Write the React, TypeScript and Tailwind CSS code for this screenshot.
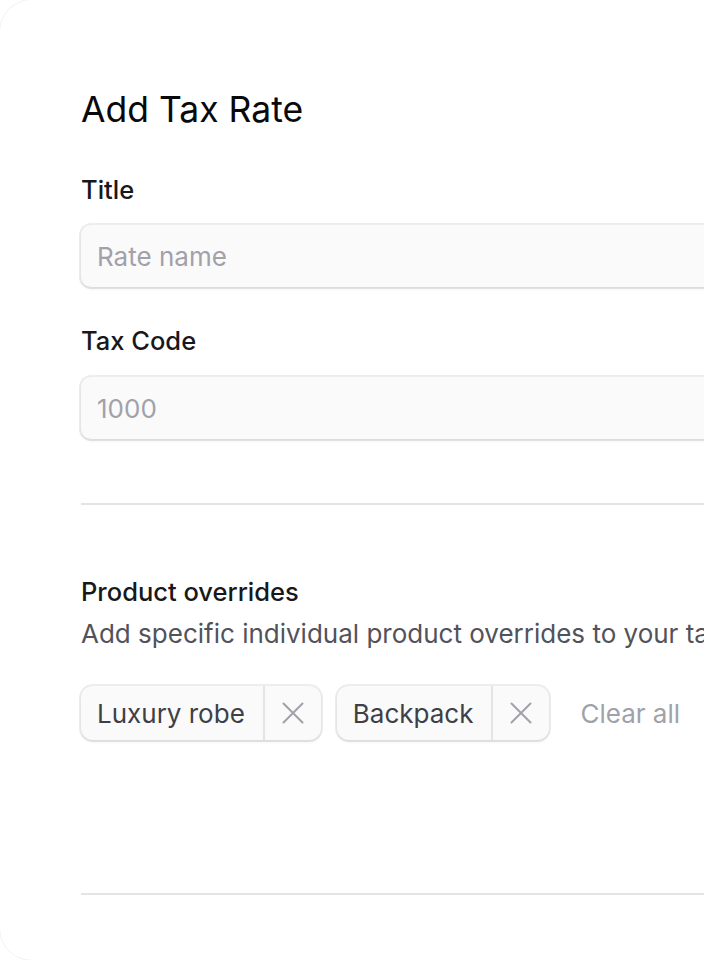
import React from "react";

function XIcon() {
  return (
    <svg width="24" height="24" viewBox="0 0 24 24" fill="none" stroke="#a1a1aa" strokeWidth="2" strokeLinecap="round">
      <path d="M2.5 2.5 L21.5 21.5 M21.5 2.5 L2.5 21.5" />
    </svg>
  );
}

function Chip({ label }: { label: string }) {
  return (
    <div className="flex h-[54px] items-stretch rounded-[12px] bg-[#fafafa] shadow-[0_0_0_2px_rgba(0,0,0,0.07),0_2px_3px_rgba(0,0,0,0.08)]">
      <span className="flex items-center pl-[16px] pr-[18px] text-[26px] text-[#3f3f46]">{label}</span>
      <span className="w-[2px] bg-[#e4e4e7]" />
      <span className="flex w-[56px] items-center justify-center">
        <XIcon />
      </span>
    </div>
  );
}

export default function App() {
  return (
    <div className="h-[960px] w-[704px] overflow-hidden bg-white" style={{ fontFamily: "Inter, 'Noto Sans', sans-serif" }}>
      <div className="h-[960px] w-[1100px] rounded-[32px] bg-white shadow-[0_0_0_1px_rgba(0,0,0,0.05)]">
        <div className="flex flex-col pl-[81px] pt-[90px]">
          <h1 className="text-[35.5px] leading-[40px] text-[#09090b]">Add Tax Rate</h1>
          <label className="mt-[44px] text-[25.5px] font-medium leading-[32px] text-[#18181b]">Title</label>
          <div className="mt-[19px] flex h-[62px] items-center rounded-[10px] bg-[#fafafa] pl-[16px] shadow-[0_0_0_2px_rgba(0,0,0,0.07),0_2px_3px_rgba(0,0,0,0.08)]">
            <span className="text-[26px] text-[#a1a1aa]">Rate name</span>
          </div>
          <label className="mt-[38px] text-[25.5px] font-medium leading-[32px] text-[#18181b]">Tax Code</label>
          <div className="mt-[20px] flex h-[62px] items-center rounded-[10px] bg-[#fafafa] pl-[16px] shadow-[0_0_0_2px_rgba(0,0,0,0.07),0_2px_3px_rgba(0,0,0,0.08)]">
            <span className="text-[26px] text-[#a1a1aa]">1000</span>
          </div>
          <div className="mt-[64px] h-[2px] bg-[#e4e4e7]" />
          <h2 className="mt-[71px] text-[25.5px] font-medium leading-[32px] text-[#18181b]">Product overrides</h2>
          <p className="mt-[10px] whitespace-nowrap text-[26px] leading-[32px] text-[#52525b]">
            Add specific individual product overrides to your tax rate.
          </p>
          <div className="mt-[36px] flex items-center">
            <Chip label="Luxury robe" />
            <div className="w-[16px]" />
            <Chip label="Backpack" />
            <button className="ml-[31px] text-[26px] text-[#a1a1aa]">Clear all</button>
          </div>
          <div className="mt-[153px] h-[2px] bg-[#e4e4e7]" />
        </div>
      </div>
    </div>
  );
}
